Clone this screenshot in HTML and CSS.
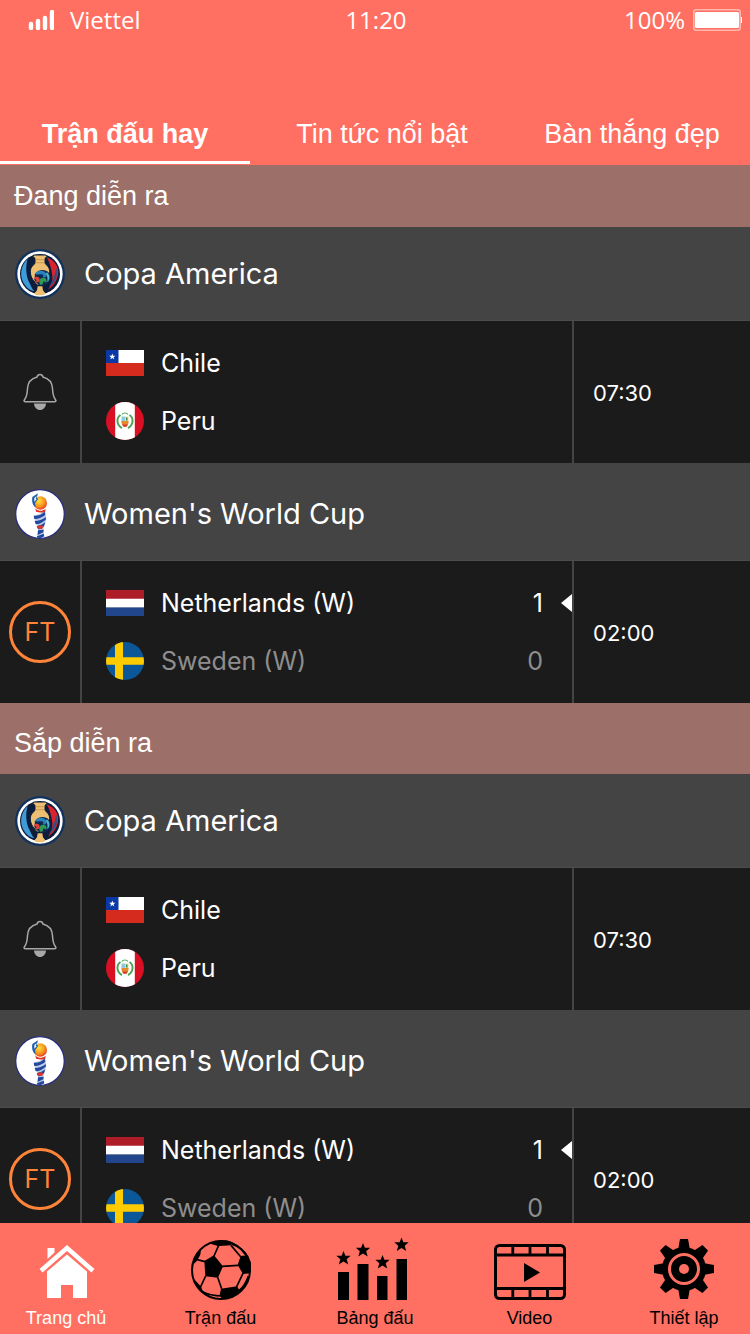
FILE: index.html
```html
<!DOCTYPE html>
<html lang="vi">
<head>
<meta charset="utf-8">
<meta name="viewport" content="width=device-width, initial-scale=1">
<title>Trận đấu hay</title>
<link rel="stylesheet" href="styles.css">
</head>
<body>
<svg class="defs" aria-hidden="true">
  <symbol id="copa" viewBox="0 0 150 150">
    <circle cx="75" cy="75" r="75" fill="#12325e"/>
    <circle cx="75" cy="75" r="68" fill="#fff"/>
    <circle cx="75" cy="75" r="60" fill="#0b1d3a"/>
    <path d="M38 30C20 46 14 72 22 94c7 18 20 30 36 33-8-8-10-18-16-28C33 80 31 52 38 30z" fill="#3f9bd8"/>
    <path d="M95 25c26 10 38 30 34 52-4 20-14 34-30 45 10-14 14-26 13-40-2-22-8-42-17-57z" fill="#d9232e"/>
    <path d="M124 56c6 24-2 44-22 58 10-16 18-34 22-58z" fill="#2a4f86"/>
    <path d="M56 18h37l3 5-6 5v14c2 6 14 10 14 26 0 20-12 28-20 40H66C58 96 46 88 46 68c0-16 12-20 14-26V28l-6-5z" fill="#ecbf72" stroke="#0b1d3a" stroke-width="3"/>
    <path d="M60 32h29M60 41h29" stroke="#b98540" stroke-width="2" fill="none"/>
    <path d="M60 76c8-14 30-18 42-4l2 22c-6 12-14 16-22 16S62 102 58 92z" fill="#0f2a52"/>
    <path d="M60 74c8-12 28-12 34 0 3 8-5 14-10 11 3-6 0-10-7-9-6 0-12 2-17-2z" fill="#2b83bd"/>
    <path d="M56 89c5-8 16-7 18 1 1 8-6 13-11 8 3-5 0-9-7-9z" fill="#e2413a"/>
    <path d="M78 108c-9-7-6-20 5-22 10-1 15 8 10 15-4-6-11-4-9 3z" fill="#2d9b52"/>
    <path d="M96 70c10 9 10 22 1 30 1-10 1-20-5-25z" fill="#4ab3cf"/>
    <path d="M68 112h14l2 12 8 10-8 5H65l-8-5 9-10z" fill="#ecbf72"/>
  </symbol>
  <symbol id="wwc" viewBox="0 0 150 150">
    <defs>
      <radialGradient id="ball" cx=".4" cy=".35" r=".7"><stop offset="0" stop-color="#ffe23a"/><stop offset=".6" stop-color="#f7931e"/><stop offset="1" stop-color="#e0371f"/></radialGradient>
      <clipPath id="disc"><circle cx="75" cy="75" r="72"/></clipPath>
    </defs>
    <circle cx="75" cy="75" r="73" fill="#fff" stroke="#2a2e7c" stroke-width="4"/>
    <g clip-path="url(#disc)">
      <circle cx="76" cy="42" r="20" fill="url(#ball)"/>
      <path d="M52 24l17-11-4 14 5 2-10 13 2 13C52 49 50 36 52 24z" fill="#1f5fae"/>
      <path d="M58 27l7-6-3 8 3 2-7 7z" fill="#fff"/>
      <path d="M60 58c8 10 22 9 32 1l-2 13-26-3z" fill="#df3427"/>
      <path d="M57 80l34-12 3 23-8 25 1 34H65l5-34-10-19z" fill="#b9cdea"/>
      <path d="M56 80c12 1 22-2 33-12l2 9c-9 8-19 12-33 13zM59 96c12 0 23-4 34-12l-1 8c-9 8-18 13-30 14zM65 112c10-2 18-6 26-12l-4 12c-6 5-12 8-18 9zM69 124l17-2-1 8-17 8zM66 142l20-8 2 8-15 8h-7z" fill="#23479d"/>
      <path d="M66 113l7-5 11 3-2 8-9 2z" fill="#df3427"/>
    </g>
  </symbol>
  <symbol id="bell" viewBox="0 0 34 38">
    <path d="M17 1.500c-1.500 0-2.700.9-2.900 2.400C8.500 5.300 4.800 9.600 4.500 15.500c-.2 6-.9 8.500-3 11.200-.8 1-.5 2 .6 2h29.800c1.100 0 1.400-1 .6-2-2.100-2.700-2.800-5.200-3-11.200-.3-5.900-4-10.200-9.600-11.600-.2-1.500-1.400-2.400-2.900-2.400z" fill="none" stroke="#a8a8a8" stroke-width="1.500"/>
    <path d="M11 30.500h12c-.3 4-2.900 6.500-6 6.500s-5.700-2.500-6-6.500z" fill="#a8a8a8"/>
  </symbol>
  <symbol id="chile" viewBox="0 0 38 26">
    <path fill="#fff" d="M0 0h38v13H0z"/><path fill="#d52b1e" d="M0 13h38v13H0z"/><path fill="#0a39a6" d="M0 0h12.500v13H0z"/>
    <path fill="#fff" d="M6.300 3.400l.8 2.300h2.400L7.600 7.200l.7 2.300-2-1.400-2 1.400.7-2.300-1.900-1.500h2.400z"/>
  </symbol>
  <symbol id="peru" viewBox="0 0 38 38">
    <clipPath id="peru-disc"><circle cx="19" cy="19" r="19"/></clipPath>
    <g clip-path="url(#peru-disc)"><path fill="#d91023" d="M0 0h38v38H0z"/><path fill="#fff" d="M9.200 0h19.600v38H9.200z"/></g>
    <path d="M14.500 13c-4.500 3-4 10 1.500 13M23.500 13c4.500 3 4 10-1.500 13" fill="none" stroke="#4da355" stroke-width="2"/>
    <path d="M16 12.500c1-2 5-2 6 0" stroke="#5aa85e" fill="none" stroke-width="1.200"/>
    <path fill="#8fc9d9" d="M15.500 14.500H19v4.500h-3.500z"/><path fill="#eedf9e" d="M19 14.500h3.500V19H19z"/>
    <path fill="#e58a2c" d="M15.300 19h7.400c0 3-1.200 5-3.700 6-2.500-1-3.700-3-3.700-6z"/>
    <path fill="#d63a2a" d="M16 22.500h6l-1.500 2.300h-3z"/><path fill="#3b8c4a" d="M20 15.500h1.500v3H20z"/>
  </symbol>
  <symbol id="netherlands" viewBox="0 0 38 26">
    <path fill="#ae1c28" d="M0 0h38v9H0z"/><path fill="#fff" d="M0 8.700h38v9H0z"/><path fill="#21468b" d="M0 17.400h38V26H0z"/>
  </symbol>
  <symbol id="sweden" viewBox="0 0 38 38">
    <clipPath id="sweden-disc"><circle cx="19" cy="19" r="19"/></clipPath>
    <g clip-path="url(#sweden-disc)"><path fill="#0b5797" d="M0 0h38v38H0z"/><path fill="#fecb00" d="M9 0h8v38H9zM0 15.200h38v7.600H0z"/></g>
  </symbol>
  <symbol id="star" viewBox="-8 -8 16 16"><path d="M0-7.500l1.900 4.800H7.200L3.200.700 4.700 6 0 3-4.700 6-3.200.700-7.200-2.700h5.300z"/></symbol>
</svg>

<header class="header">
  <div class="status">
    <div class="carrier">
      <svg class="signal" viewBox="0 0 26 20" aria-hidden="true"><path d="M3 18v-4M10 18v-7M17 18V8M24 18V2" stroke="#fff" stroke-width="4.400" stroke-linecap="round"/></svg>
      <span>Viettel</span>
    </div>
    <time>11:20</time>
    <div class="power">
      <span>100%</span>
      <svg class="battery" viewBox="0 0 49 22" aria-hidden="true"><rect x=".8" y=".8" width="46.400" height="20.400" rx="2.500" fill="none" stroke="#ffb5ab" stroke-width="1.600"/><rect x="2" y="3" width="44" height="16" rx="1.500" fill="#fff"/><path d="M48 8h1v6h-1z" fill="#fff"/></svg>
    </div>
  </div>
  <div class="tabs" role="tablist">
    <button class="tab tab-active" role="tab" aria-selected="true">Trận đấu hay</button>
    <button class="tab" role="tab" aria-selected="false">Tin tức nổi bật</button>
    <button class="tab" role="tab" aria-selected="false">Bàn thắng đẹp</button>
  </div>
</header>

<main class="feed">
  <section class="group">
    <h2 class="group-title">Đang diễn ra</h2>
    <h3 class="league"><svg class="crest" aria-hidden="true"><use href="#copa"/></svg>Copa America</h3>
    <article class="match">
      <div class="state"><button class="bell" aria-label="Thông báo"><svg class="bell-icon"><use href="#bell"/></svg></button></div>
      <div class="teams">
        <div class="team"><svg class="flag"><use href="#chile"/></svg><span class="name">Chile</span></div>
        <div class="team"><svg class="flag flag-round"><use href="#peru"/></svg><span class="name">Peru</span></div>
      </div>
      <time class="kickoff">07:30</time>
    </article>
    <h3 class="league"><svg class="crest" aria-hidden="true"><use href="#wwc"/></svg>Women's World Cup</h3>
    <article class="match">
      <div class="state"><span class="fulltime">FT</span></div>
      <div class="teams">
        <div class="team winner"><svg class="flag"><use href="#netherlands"/></svg><span class="name">Netherlands (W)</span><span class="score">1</span></div>
        <div class="team loser"><svg class="flag flag-round"><use href="#sweden"/></svg><span class="name">Sweden (W)</span><span class="score">0</span></div>
      </div>
      <time class="kickoff">02:00</time>
    </article>
  </section>

  <section class="group">
    <h2 class="group-title">Sắp diễn ra</h2>
    <h3 class="league"><svg class="crest" aria-hidden="true"><use href="#copa"/></svg>Copa America</h3>
    <article class="match">
      <div class="state"><button class="bell" aria-label="Thông báo"><svg class="bell-icon"><use href="#bell"/></svg></button></div>
      <div class="teams">
        <div class="team"><svg class="flag"><use href="#chile"/></svg><span class="name">Chile</span></div>
        <div class="team"><svg class="flag flag-round"><use href="#peru"/></svg><span class="name">Peru</span></div>
      </div>
      <time class="kickoff">07:30</time>
    </article>
    <h3 class="league"><svg class="crest" aria-hidden="true"><use href="#wwc"/></svg>Women's World Cup</h3>
    <article class="match">
      <div class="state"><span class="fulltime">FT</span></div>
      <div class="teams">
        <div class="team winner"><svg class="flag"><use href="#netherlands"/></svg><span class="name">Netherlands (W)</span><span class="score">1</span></div>
        <div class="team loser"><svg class="flag flag-round"><use href="#sweden"/></svg><span class="name">Sweden (W)</span><span class="score">0</span></div>
      </div>
      <time class="kickoff">02:00</time>
    </article>
  </section>
</main>

<nav class="nav">
  <a class="nav-item nav-current" href="#home" aria-current="page">
    <svg class="nav-icon" viewBox="0 0 72 64" fill="#fff" aria-hidden="true"><path d="M17.500 11h7v4.500l-7 6.500z"/><path d="M37 8l27.500 24-3 3.500L37 14 12.500 35.500l-3-3.500z"/><path d="M37 17.500l20 17V61H43V48H31v13H17V34.500z"/></svg>
    Trang chủ
  </a>
  <a class="nav-item" href="#matches">
    <svg class="nav-icon" viewBox="0 0 72 64" aria-hidden="true">
      <g transform="translate(36 33) scale(.3333) translate(-104 -108)">
        <path d="M54 81l29-17 27 33-15 34-38-4zM163 66l22-2 9 22-2 32-22 2-16-27zM104 164l48-7 8 13-20 20-34 4-6-12zM78 26q26-12 54-4l4 12-38 2zM20 92q4-30 24-46l-2 16-10 18zM24 136l20 22 8 20q-20-16-28-42z"/>
        <path d="M83 66l15-34M134 34l29 34M108 97l47-3M94 130l12 34M58 126l-16 34M56 83L30 76M150 160l20-42M136 30q38 14 48 40M46 172q24 14 62 14M158 170q18-14 28-44M98 34L70 26" fill="none" stroke="#000" stroke-width="5"/>
        <circle cx="104" cy="108" r="87" fill="none" stroke="#000" stroke-width="6"/>
      </g>
    </svg>
    Trận đấu
  </a>
  <a class="nav-item" href="#table">
    <svg class="nav-icon" viewBox="0 0 72 64" aria-hidden="true"><path d="M-1 35h11v28H-1zM18.500 27h11v36h-11zM38 39h10.500v24H38zM57.500 22H68v41H57.500z"/><use href="#star" x="-3.500" y="13.500" width="16" height="16"/><use href="#star" x="16" y="5.500" width="16" height="16"/><use href="#star" x="35.500" y="17.500" width="16" height="16"/><use href="#star" x="54.500" y="0" width="16" height="16"/></svg>
    Bảng đấu
  </a>
  <a class="nav-item" href="#video">
    <svg class="nav-icon" viewBox="0 0 72 64" aria-hidden="true"><rect x="1.500" y="8.500" width="69" height="53" rx="4" fill="none" stroke="#000" stroke-width="3"/><path d="M2 18h68M2 51.500h68M18.800 9v9M36 9v9M53.500 9v9M18.800 51v10M36 51v10M53.500 51v10" stroke="#000" stroke-width="2.800"/><path d="M30 26l16 9.500L30 45z"/></svg>
    Video
  </a>
  <a class="nav-item" href="#settings">
    <svg class="nav-icon" viewBox="0 0 72 64" aria-hidden="true">
      <g transform="translate(36 32)">
        <path d="M-6-19L-4-30H4L6-19V19L4 30H-4L-6 19z"/><path transform="rotate(45)" d="M-6-19L-4-30H4L6-19V19L4 30H-4L-6 19z"/><path transform="rotate(90)" d="M-6-19L-4-30H4L6-19V19L4 30H-4L-6 19z"/><path transform="rotate(135)" d="M-6-19L-4-30H4L6-19V19L4 30H-4L-6 19z"/>
        <circle r="22"/><circle r="14.500" fill="none" stroke="#ff7062" stroke-width="3"/><circle r="5" fill="#ff7062"/>
      </g>
    </svg>
    Thiết lập
  </a>
</nav>
</body>
</html>
```

FILE: styles.css
```css
* {
  box-sizing: border-box;
}

body {
  display: flex;
  flex-direction: column;
  height: 100vh;
  margin: 0;
  background: #1b1b1b;
  color: #fff;
  font-family: "Liberation Sans", Arial, sans-serif;
}

button {
  padding: 0;
  border: 0;
  background: none;
  color: inherit;
  font: inherit;
}

.defs {
  position: absolute;
  width: 0;
  height: 0;
}

.header {
  flex: none;
  background: #ff7062;
}

.status {
  display: grid;
  grid-template-columns: 1fr auto 1fr;
  align-items: center;
  height: 40px;
  padding: 0 8px 0 28px;
  font: 24px/40px "Open Sans", "Noto Sans", sans-serif;
}

.status time {
  margin-right: 18px;
}

.carrier,
.power {
  display: flex;
  align-items: center;
}

.carrier {
  gap: 16px;
}

.power {
  justify-content: flex-end;
  gap: 8px;
}

.signal {
  width: 26px;
  height: 20px;
}

.battery {
  width: 49px;
  height: 22px;
}

.tabs {
  display: grid;
  grid-template-columns: repeat(3, 1fr);
  padding: 68px 0 1px;
}

.tab {
  height: 56px;
  border-bottom: 3px solid transparent;
  font-size: 27px;
  line-height: 53px;
}

.tab + .tab {
  padding-left: 14px;
}

.tab-active {
  border-bottom-color: #fff;
  font-weight: bold;
}

.feed {
  flex: 1;
  min-height: 0;
  overflow: hidden;
}

.group-title {
  margin: 0;
  padding: 0 14px;
  background: #9c7069;
  font-size: 27px;
  font-weight: normal;
  line-height: 62px;
}

.group + .group .group-title {
  padding-top: 9px;
}

.league {
  display: flex;
  align-items: center;
  gap: 19px;
  margin: 0;
  padding: 22px 15px 21px;
  background: #444;
  font: 29px/50px Inter, sans-serif;
}

.match + .league {
  padding-top: 26px;
}

.crest {
  width: 50px;
  height: 50px;
}

.match {
  display: grid;
  grid-template-columns: 82px 1fr 178px;
  border-top: 1px solid #4c4c4c;
  font-family: Inter, sans-serif;
}

.state {
  display: flex;
  align-items: center;
  justify-content: center;
  border-right: 2px solid #444;
}

.bell-icon {
  display: block;
  width: 34px;
  height: 38px;
}

.fulltime {
  width: 62px;
  height: 62px;
  border: 3px solid #ff8439;
  border-radius: 50%;
  color: #ff8439;
  font-size: 25px;
  line-height: 56px;
  text-align: center;
}

.teams {
  padding: 13px 0 13px 24px;
}

.team {
  display: flex;
  align-items: center;
  font-size: 25px;
  line-height: 58px;
}

.flag {
  width: 38px;
  height: 26px;
  margin-right: 17px;
}

.flag-round {
  height: 38px;
}

.name {
  flex: 1;
}

.score {
  margin-right: 29px;
}

.winner .score {
  margin-right: 18px;
}

.winner::after {
  content: "";
  border: solid transparent;
  border-width: 9px 11px 9px 0;
  border-right-color: #fff;
}

.loser {
  color: #8e8e8e;
}

.kickoff {
  display: flex;
  align-items: center;
  padding: 1px 0 0 19px;
  border-left: 2px solid #444;
  font-size: 22px;
}

.nav {
  display: flex;
  flex: none;
  justify-content: space-between;
  padding: 14px 24px 3px;
  background: #ff7062;
}

.nav-item {
  display: flex;
  flex-direction: column;
  align-items: center;
  gap: 4px;
  width: 84px;
  color: #000;
  font-size: 18px;
  line-height: 26px;
  text-decoration: none;
  white-space: nowrap;
}

.nav-current {
  color: #fff;
}

.nav-icon {
  width: 72px;
  height: 64px;
  overflow: visible;
}
```
